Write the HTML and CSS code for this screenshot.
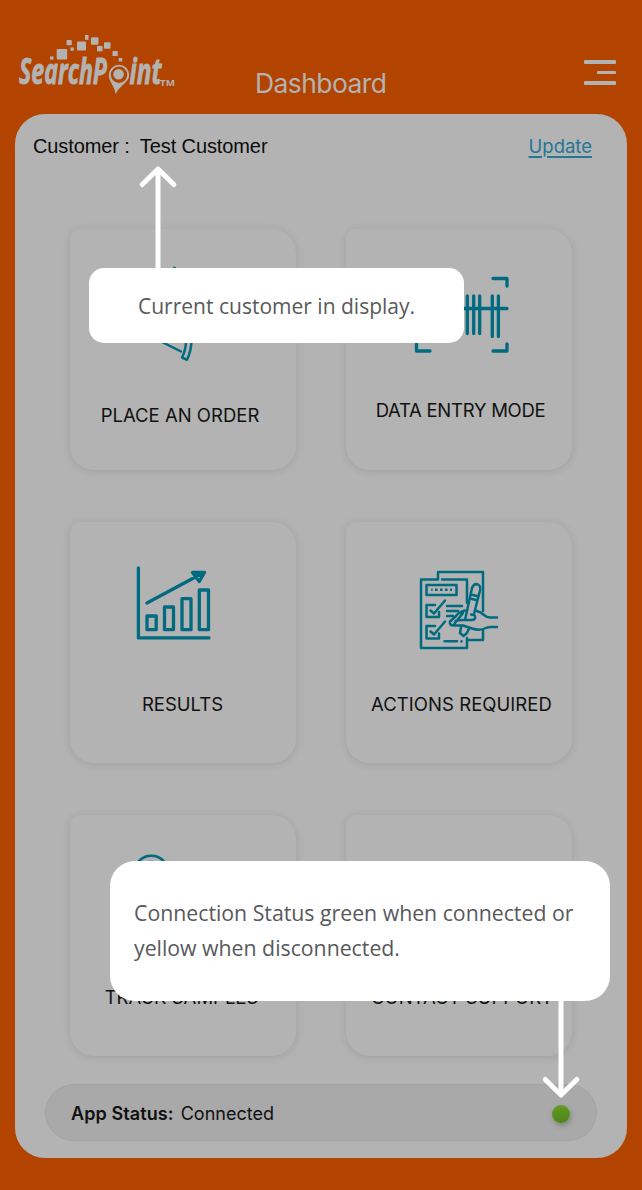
FILE: index.html
```html
<!DOCTYPE html>
<html lang="en">
<head>
<meta charset="utf-8">
<title>Dashboard</title>
<link rel="stylesheet" href="styles.css">
</head>
<body>
<div class="app">
  <header class="header">
    <svg class="logo" viewBox="0 0 180 75" role="img" aria-label="SearchPoint">
      <g class="logo-squares">
        <rect x="50" y="16.500" width="3.500" height="3"/><rect x="56.700" y="9" width="10.500" height="10.500" rx="1"/>
        <rect x="66.500" y="0" width="5.300" height="5.300" rx="1"/><rect x="70.500" y="7.500" width="3.300" height="3.300"/>
        <rect x="77" y="1.500" width="9" height="9" rx="1"/><rect x="85" y="-5" width="3.500" height="4.800"/>
        <rect x="91" y="-2.800" width="7.500" height="7.500" rx="1"/><rect x="97" y="6" width="5.500" height="5.300"/>
        <rect x="104" y="2.200" width="6.500" height="6.500" rx="1"/><rect x="112.500" y="11" width="5.200" height="5"/>
        <rect x="118.700" y="18" width="3.500" height="3.500"/>
      </g>
      <text class="logo-word" x="19" y="44" textLength="88" lengthAdjust="spacingAndGlyphs">SearchP</text>
      <text class="logo-word" x="129.500" y="44" textLength="32" lengthAdjust="spacingAndGlyphs">int</text>
      <path class="logo-pin" fill-rule="evenodd" d="M119 24.800a10.200 10.200 0 0 1 10.200 10.200c0 7-8 9-13.700 19-1-9-6.700-12-6.700-19a10.200 10.200 0 0 1 10.200-10.200zm0 1.800a8.200 8.200 0 1 0 0 16.400a8.200 8.200 0 0 0 0-16.400z"/>
      <circle class="logo-pin" cx="118.600" cy="34.300" r="5.300"/>
      <text class="logo-tm" x="160" y="45.500" textLength="15" lengthAdjust="spacingAndGlyphs">TM</text>
    </svg>
    <h1 class="title">Dashboard</h1>
    <div class="menu"><span></span><span class="short"></span><span></span></div>
  </header>
  <main class="panel">
    <div class="customer">
      <span class="customer-label">Customer :</span>
      <span class="customer-name">Test Customer</span>
      <a class="update">Update</a>
    </div>
    <div class="cards">
      <section class="card">
        <svg class="icon" viewBox="138 268 90 90"><path d="M162 342L181 351.500M186 340q0 10-4 17.500l5 2.300q4-8 4.700-20M174.500 267.700v1"/></svg>
        <span class="label order">PLACE AN ORDER</span>
      </section>
      <section class="card">
        <svg class="icon" viewBox="414 268 90 90"><path class="heavy" d="M416.500 286v-7.500H430M493 278.500h14V286M416.500 344v7H430M493 351h14v-7M424 308.500h83M467.300 296v37.500M473.700 296v37.500M479.700 296v37.500M492.300 296v40.500M498.400 296v40.500"/></svg>
        <span class="label entry">DATA ENTRY MODE</span>
      </section>
      <section class="card">
        <svg class="icon" viewBox="138 561 90 90"><path class="heavy" d="M138.400 568v69.900H209M147 603L201 574M192.500 572.500H204.500L199.300 581.500zM147 616h9.200v13.700H147zM164.500 607h9v22.700h-9zM182 598.700h9v31h-9zM199.300 590h9.200v39.700h-9.200z"/></svg>
        <span class="label results">RESULTS</span>
      </section>
      <section class="card">
        <svg class="icon" viewBox="414 561 90 90">
          <path d="M438 579.500V572h45v39M483 630.500V640H468M438 579.500H421V648H467V638M442 579.500H467V603M426.500 585H456.500V595H426.500z"/>
          <path d="M435 605H426.500V617H439V612M430.500 610.500L434 613.500L445 600.500M435 626H426.500V638.500H439V633.500M430.500 631.500L434 634.500L445 621.500"/>
          <path d="M447 606H462M447 611H458M447 616H453M444.500 641.300H457M461.500 641.300v.1"/>
          <path class="dots" d="M431.300 589.800H452"/>
          <path d="M465 620L472 588q2-5 6-3.500q3 1.500 2 6L474 614M471.300 594.500L478.500 596.500M470.500 598.500L477.500 600.500M461 627L460 633L463.500 636L467 633L469 628.500"/>
          <path d="M465 610.500Q459 612 456 616L450 621.500Q449 625 453 625.500L463 613M455.500 621Q458 620 463 620H472Q476 619.500 475 616Q474 614.500 471 614.500M475.500 610.500Q481 612 484 615Q487 617.500 490 617.500H497M453.500 625.500H463L472 628.500Q480 631 486 628Q488 627 491 627H497"/>
        </svg>
        <span class="label actions">ACTIONS REQUIRED</span>
      </section>
      <section class="card">
        <svg class="icon" viewBox="138 854 90 90"><path d="M134 873a17.300 17.300 0 0 1 34.600 0q0 14-17.300 30Q134 887 134 873z"/><circle cx="151.300" cy="873.500" r="11.500"/></svg>
        <span class="label track">TRACK SAMPLES</span>
      </section>
      <section class="card">
        <svg class="icon" viewBox="414 854 90 90"><path d="M430 909V899a30 30 0 0 1 60 0v10M430 902h10v20H430zM480 902h10v20H480z"/></svg>
        <span class="label support">CONTACT SUPPORT</span>
      </section>
    </div>
    <footer class="status"><strong>App Status:</strong><span>Connected</span><i class="dot"></i></footer>
  </main>
  <aside class="tip tip-customer"><p>Current customer in display.</p></aside>
  <aside class="tip tip-status"><p>Connection Status green when connected or</p><p class="second">yellow when disconnected.</p></aside>
  <svg class="arrow arrow-up" viewBox="0 0 40 104"><path d="M20 104V5"/><path class="head" d="M4.200 19.500L20 4L35.800 19.500"/></svg>
  <svg class="arrow arrow-down" viewBox="0 0 40 100"><path d="M20 0V94"/><path class="head" d="M4.200 79.500L20 95L35.800 79.500"/></svg>
</div>
</body>
</html>
```
FILE: styles.css
```css
* { box-sizing: border-box; }
body { margin: 0; background: #b24400; }
.app { position: relative; width: 642px; height: 1190px; overflow: hidden; padding: 0 15px; background: #b24400; font-family: Inter, "Liberation Sans", sans-serif; }
.header { height: 114px; margin: 0 -15px; display: flex; align-items: flex-start; }
.logo { width: 180px; height: 75px; margin-top: 40px; overflow: visible; flex: none; }
.logo-squares, .logo-pin, .logo-word, .logo-tm { fill: #b3b3b3; }
.logo-word { font: italic 700 36px "Open Sans", sans-serif; stroke: #b3b3b3; stroke-width: .9; }
.logo-tm { font: 700 8px "Open Sans", sans-serif; }
.title { margin: 66px 0 0 75px; width: 132px; font-size: 26.500px; line-height: 34px; font-weight: 400; letter-spacing: -.6px; color: #b3b3b3; white-space: nowrap; }
.menu { margin: 60px 26px 0 auto; width: 32px; display: flex; flex-direction: column; align-items: flex-end; gap: 7px; }
.menu span { width: 32px; height: 3.700px; background: #b3b3b3; border-radius: 1px; }
.menu .short { width: 19px; }
.panel { height: 1044px; border-radius: 30px; background: #b3b3b3; padding: 17px 30px 17px; display: flex; flex-direction: column; }
.customer { height: 30px; margin: 0 5px 0 -12px; display: flex; align-items: center; font: 20px/30px "Liberation Sans", sans-serif; letter-spacing: -.1px; color: #0b0b0b; white-space: pre; }
.customer-name { margin-left: 10px; }
.update { margin-left: auto; font: 18.500px/28px Inter, sans-serif; letter-spacing: 0; color: #257798; text-decoration: underline; text-decoration-thickness: 1.500px; text-underline-offset: 3px; }
.cards { margin: 68px 25px 0; display: grid; grid-template-columns: 226px 226px; grid-auto-rows: 241px; gap: 52px 50px; }
.card { border-radius: 10px 24px 24px 24px; box-shadow: 0 1px 9px rgba(0, 0, 0, .11); display: flex; flex-direction: column; align-items: center; }
.icon { width: 90px; height: 90px; margin-top: 39px; overflow: visible; fill: none; stroke: #006b80; stroke-width: 2.500; stroke-linecap: round; stroke-linejoin: round; }
.heavy { stroke-width: 3.300; }
.dots { stroke-width: 2.600; stroke-linecap: butt; stroke-dasharray: 2.600 2.400; stroke-dashoffset: 1.300; }
.label { margin-top: 40px; font-size: 18.500px; line-height: 26px; color: #111; white-space: nowrap; }
.order { margin: 44px 6px 0 0; }
.entry { margin: 39px 0 0 3px; letter-spacing: -.27px; }
.results { margin-right: 1px; }
.actions { margin-left: 5px; letter-spacing: .05px; }
.track { margin-right: 3px; }
.support { margin-left: 6px; }
.status { height: 57px; margin-top: auto; border: 1px solid #a3a3a3; border-radius: 29px; background: #a9a9a9; display: flex; align-items: center; gap: 7px; padding: 2px 26px 0 25px; font-size: 18px; color: #101010; }
.status strong { font-weight: 600; letter-spacing: .1px; }
.dot { width: 18px; height: 18px; margin-left: auto; border-radius: 50%; background: linear-gradient(#5f9c20, #4f8419); box-shadow: 1px 3px 5px rgba(60, 90, 50, .4); }
.tip { position: absolute; background: #fff; color: #58595b; font: 22.600px/35px "Open Sans", sans-serif; white-space: nowrap; }
.tip p { margin: 0; width: max-content; transform: scaleX(.941); transform-origin: left; }
.tip-customer p { transform: scaleX(.93); }
.tip-customer { left: 89px; top: 268px; width: 375px; height: 75px; border-radius: 15px; padding: 20px 49px; }
.tip-status { left: 109.500px; top: 860.500px; width: 500px; height: 140px; border-radius: 25px; padding: 34.500px 24px; }
.arrow { position: absolute; fill: none; stroke: #fff; stroke-width: 5; }
.head { stroke-linecap: round; stroke-linejoin: round; }
.arrow-up { left: 138px; top: 165px; width: 40px; height: 104px; }
.arrow-down { left: 541px; top: 1000px; width: 40px; height: 100px; }
```
